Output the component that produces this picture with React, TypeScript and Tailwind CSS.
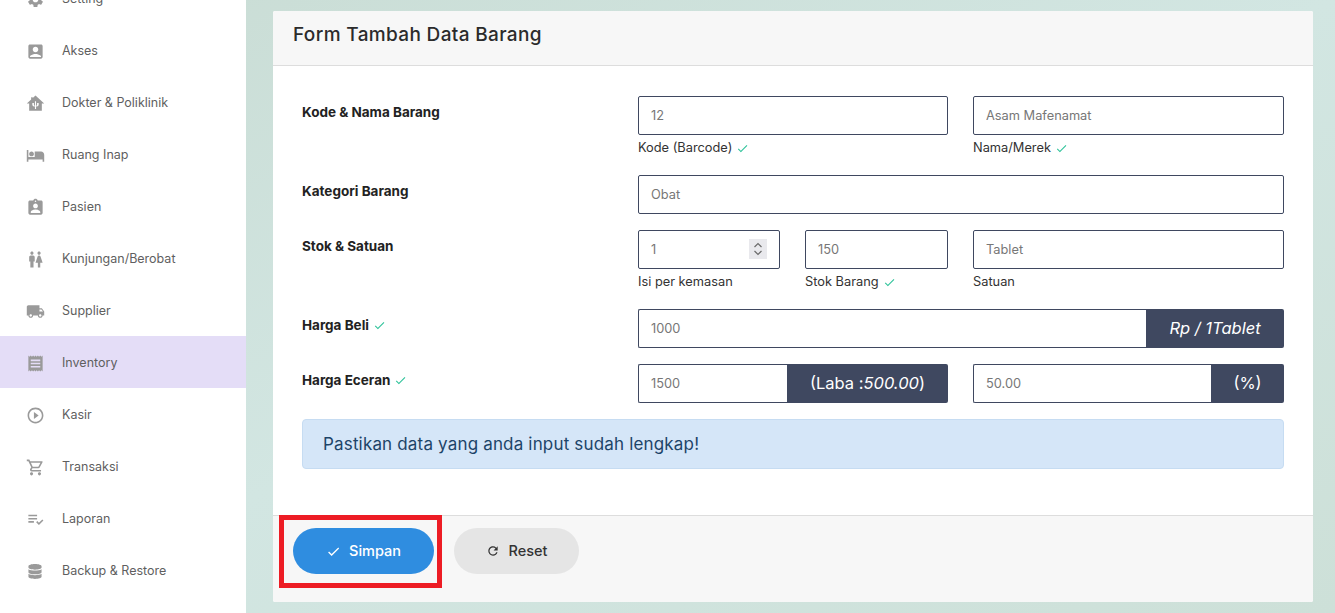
import React from 'react';
import { MdSettings, MdAccountBox, MdHotel, MdAssignmentInd, MdWc, MdLocalShipping, MdReceipt, MdPlayCircleOutline, MdOutlineShoppingCart, MdPlaylistAddCheck, MdCheck, MdRefresh } from 'react-icons/md';
import { FaDatabase } from 'react-icons/fa';

const ClinicIcon: React.FC<{ className?: string }> = ({ className }) => (
    <svg className={className} viewBox="0 0 24 24" fill="currentColor">
        <path d="M12 2 8.5 5.2V4H6.5v3L1 12h3v9h16v-9h3L12 2z" />
        <path d="M11.3 9h1.4v10h-1.4zM8 11.5h2v2.2c0 .5.4 1 1 1v1.2c-1.6 0-3-1-3-2.4v-2zM14 11.5h2v2c0 1.4-1.4 2.4-3 2.4v-1.2c.6 0 1-.5 1-1v-2.2z" fill="#fff" />
    </svg>
);

const menu = [
    { label: 'Setting', icon: MdSettings },
    { label: 'Akses', icon: MdAccountBox },
    { label: 'Dokter & Poliklinik', icon: ClinicIcon },
    { label: 'Ruang Inap', icon: MdHotel },
    { label: 'Pasien', icon: MdAssignmentInd },
    { label: 'Kunjungan/Berobat', icon: MdWc },
    { label: 'Supplier', icon: MdLocalShipping },
    { label: 'Inventory', icon: MdReceipt, active: true },
    { label: 'Kasir', icon: MdPlayCircleOutline },
    { label: 'Transaksi', icon: MdOutlineShoppingCart },
    { label: 'Laporan', icon: MdPlaylistAddCheck },
    { label: 'Backup & Restore', icon: FaDatabase, small: true },
];

const Field: React.FC<{ value: string; className?: string }> = ({ value, className }) => (
    <input
        readOnly
        value={value}
        className={`h-[39px] w-full min-w-0 border border-[#3f4860] rounded-[2px] bg-white px-3 text-[12.8px] text-[#777777] outline-none ${className ?? ''}`}
    />
);

const Tick: React.FC = () => <MdCheck className="w-[13px] h-[13px] text-[#2fc39a]" />;

const Hint: React.FC<{ text: string; check?: boolean }> = ({ text, check }) => (
    <div className="flex items-center gap-[4px] h-[26px] text-[12.8px] text-[#333333]">
        {text}
        {check && <Tick />}
    </div>
);

const Addon: React.FC<{ className?: string; children: React.ReactNode }> = ({ className, children }) => (
    <div className={`h-[39px] shrink-0 flex items-center justify-center bg-[#3f4860] text-white text-[16.5px] rounded-r-[2px] ${className ?? ''}`}>
        {children}
    </div>
);

const Label: React.FC<{ children: React.ReactNode }> = ({ children }) => (
    <div className="w-[336px] shrink-0 pt-[6px]">
        <div className="flex items-center gap-[4px] text-[13.5px] font-bold text-[#222222]">{children}</div>
    </div>
);

export default function App() {
    return (
        <div className="flex h-[613px] w-full overflow-hidden bg-gradient-to-br from-[#c9dcd4] via-[#d2e6e2] to-[#cde0d8] font-['Inter','Open_Sans',sans-serif]">
            <aside className="w-[246px] shrink-0 bg-white overflow-hidden">
                <nav className="-mt-[28px]">
                    {menu.map(item => {
                        const Icon = item.icon;
                        return (
                            <div key={item.label} className={`h-[52px] pt-[2px] flex items-center ${item.active ? 'bg-[#e4ddf7]' : ''}`}>
                                <div className="w-[62px] shrink-0 pl-[25px]">
                                    <div className="w-[20px] flex justify-center">
                                        <Icon className={`${item.small ? 'w-[14px] h-[15px]' : 'w-[19px] h-[19px]'} text-[#9a9a9a]`} />
                                    </div>
                                </div>
                                <span className="text-[12.5px] text-[#5f5f5f]">{item.label}</span>
                            </div>
                        );
                    })}
                </nav>
            </aside>
            <main className="flex-1 min-w-0 pl-[27px] pr-[22px] pt-[11px] pb-[11px]">
                <div className="h-full flex flex-col bg-white rounded-[2px] overflow-hidden">
                    <header className="h-[55px] shrink-0 flex items-start pt-[11px] px-[20px] bg-[#f7f7f7] border-b border-[#dddddd]">
                        <h1 className="text-[19px] tracking-[0.35px] font-medium text-[#2b2b2b] leading-[26px]">Form Tambah Data Barang</h1>
                    </header>
                    <div className="flex-1 pt-[30px] px-[29px]">
                        <div className="flex h-[79px]">
                            <Label>Kode &amp; Nama Barang</Label>
                            <div className="flex-1 grid grid-cols-[310px_311px] gap-[25px]">
                                <div>
                                    <Field value="12" />
                                    <Hint text="Kode (Barcode)" check />
                                </div>
                                <div>
                                    <Field value="Asam Mafenamat" />
                                    <Hint text="Nama/Merek" check />
                                </div>
                            </div>
                        </div>
                        <div className="flex h-[55px]">
                            <Label>Kategori Barang</Label>
                            <div className="flex-1"><Field value="Obat" /></div>
                        </div>
                        <div className="flex h-[79px]">
                            <Label>Stok &amp; Satuan</Label>
                            <div className="flex-1 grid grid-cols-[310px_311px] gap-[25px]">
                                <div className="grid grid-cols-[142px_143px] gap-[25px]">
                                    <div>
                                        <div className="relative">
                                            <Field value="1" />
                                            <div className="absolute right-[13px] top-[9px] w-[18px] h-[20px] bg-[#e9e9ed] flex flex-col items-center justify-center">
                                                <svg className="w-[10px] h-[16px] text-[#6b6b6b]" viewBox="0 0 10 16" fill="none" stroke="currentColor" strokeWidth="1.2">
                                                    <path d="M1.5 6 5 2.5 8.5 6M1.5 10 5 13.5 8.5 10" />
                                                </svg>
                                            </div>
                                        </div>
                                        <Hint text="Isi per kemasan" />
                                    </div>
                                    <div>
                                        <Field value="150" />
                                        <Hint text="Stok Barang" check />
                                    </div>
                                </div>
                                <div>
                                    <Field value="Tablet" />
                                    <Hint text="Satuan" />
                                </div>
                            </div>
                        </div>
                        <div className="flex h-[55px]">
                            <Label>Harga Beli <Tick /></Label>
                            <div className="flex-1 flex">
                                <Field value="1000" className="rounded-r-none border-r-0" />
                                <Addon className="w-[138px] italic">Rp / 1Tablet</Addon>
                            </div>
                        </div>
                        <div className="flex h-[55px]">
                            <Label>Harga Eceran <Tick /></Label>
                            <div className="flex-1 grid grid-cols-[310px_311px] gap-[25px]">
                                <div className="flex">
                                    <Field value="1500" className="rounded-r-none border-r-0" />
                                    <Addon className="w-[161px]">(Laba :<i>500.00</i>)</Addon>
                                </div>
                                <div className="flex">
                                    <Field value="50.00" className="rounded-r-none border-r-0" />
                                    <Addon className="w-[73px]">(%)</Addon>
                                </div>
                            </div>
                        </div>
                        <div className="h-[50px] flex items-center pt-[1px] px-[20px] bg-[#d5e6f8] border border-[#c6dcf2] rounded-[4px] text-[17px] tracking-[0.17px] text-[#1d4468]">
                            Pastikan data yang anda input sudah lengkap!
                        </div>
                    </div>
                    <footer className="h-[87px] shrink-0 flex gap-[20px] pt-[12px] px-[20px] bg-[#f7f7f7] border-t border-[#dddddd]">
                        <button className="relative w-[141px] h-[46px] flex items-center justify-center gap-[8px] rounded-full bg-[#2f8de0] text-white text-[14.5px] font-medium">
                            <MdCheck className="w-[15px] h-[15px]" />
                            Simpan
                            <span className="absolute -left-[14px] -top-[13px] w-[163px] h-[73px] border-[5px] border-[#ed1c24]" />
                        </button>
                        <button className="w-[125px] h-[46px] flex items-center justify-center gap-[9px] rounded-full bg-[#e5e5e5] text-[#333333] text-[14.5px] font-medium">
                            <MdRefresh className="w-[14px] h-[14px]" />
                            Reset
                        </button>
                    </footer>
                </div>
            </main>
        </div>
    );
}
